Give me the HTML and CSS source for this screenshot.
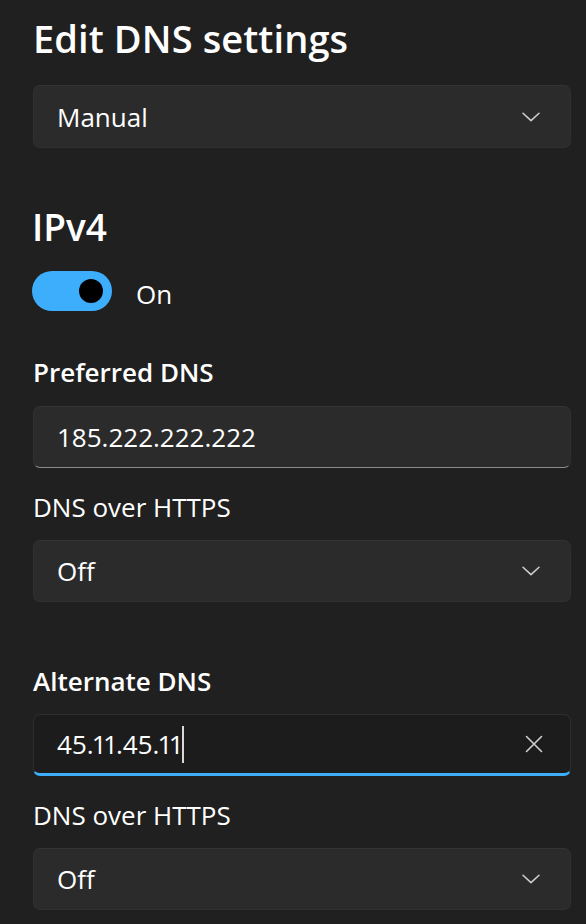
FILE: index.html
```html
<!DOCTYPE html>
<html lang="en">
<head>
<meta charset="utf-8">
<title>Edit DNS settings</title>
<link rel="stylesheet" href="styles.css">
</head>
<body>
<main class="panel">
  <h1 class="title">Edit DNS settings</h1>
  <div class="select select-mode">
    <span class="select-value">Manual</span>
    <svg class="chevron" viewBox="0 0 18 10" width="18" height="10"><path d="M1 1.2 L9 8.6 L17 1.2" /></svg>
  </div>

  <h2 class="section">IPv4</h2>
  <div class="toggle-row">
    <span class="toggle"><span class="knob"></span></span>
    <span class="toggle-label">On</span>
  </div>

  <div class="field field-first">
    <div class="field-label strong">Preferred DNS</div>
    <div class="textbox">185.222.222.222</div>
  </div>
  <div class="field field-sub">
    <div class="field-label">DNS over HTTPS</div>
    <div class="select">
      <span class="select-value">Off</span>
      <svg class="chevron" viewBox="0 0 18 10" width="18" height="10"><path d="M1 1.2 L9 8.6 L17 1.2" /></svg>
    </div>
  </div>

  <div class="field field-group">
    <div class="field-label strong">Alternate DNS</div>
    <div class="textbox focused">
      <span class="input-text">45.11.45.11</span><span class="caret"></span>
      <svg class="clear" viewBox="0 0 18 18" width="18" height="18"><path d="M1.5 1.5 L16.5 16.5 M16.5 1.5 L1.5 16.5" /></svg>
    </div>
  </div>
  <div class="field field-sub">
    <div class="field-label">DNS over HTTPS</div>
    <div class="select">
      <span class="select-value">Off</span>
      <svg class="chevron" viewBox="0 0 18 10" width="18" height="10"><path d="M1 1.2 L9 8.6 L17 1.2" /></svg>
    </div>
  </div>
</main>
</body>
</html>
```

FILE: styles.css
```css
html, body {
  margin: 0;
  padding: 0;
  background: #202020;
}

body {
  font-family: "Open Sans", "Noto Sans", sans-serif;
  color: #ffffff;
  width: 586px;
  height: 924px;
  overflow: hidden;
}

.panel {
  padding: 16px 15px 0 33px;
  display: flex;
  flex-direction: column;
}

.title {
  margin: 0;
  font-size: 38px;
  font-weight: 600;
  line-height: 44px;
  height: 44px;
  letter-spacing: 0.1px;
}

.select,
.textbox {
  box-sizing: border-box;
  height: 62px;
  border-radius: 7px;
  background: #2b2b2b;
  border: 1px solid #303030;
  border-top-color: #333333;
  display: flex;
  align-items: center;
  padding: 0 30px 0 23px;
  font-size: 26px;
  line-height: 36px;
}

.select {
  justify-content: space-between;
}

.select-mode {
  margin-top: 25px;
  height: 63px;
}

.chevron {
  fill: none;
  stroke: #d0d0d0;
  stroke-width: 1.5;
  stroke-linecap: round;
  stroke-linejoin: round;
}

.section {
  margin: 55px 0 0;
  font-size: 37px;
  font-weight: 600;
  line-height: 48px;
  height: 48px;
  margin-left: -1px;
}

.toggle-row {
  margin-top: 20px;
  display: flex;
  align-items: center;
  height: 40px;
  margin-left: -1px;
}

.toggle {
  box-sizing: border-box;
  width: 80px;
  height: 40px;
  border-radius: 20px;
  background: #3caefc;
  display: flex;
  align-items: center;
  justify-content: flex-end;
  padding-right: 9px;
}

.knob {
  width: 24px;
  height: 24px;
  border-radius: 50%;
  background: #000000;
}

.toggle-label {
  margin-left: 24px;
  padding-top: 5px;
  font-size: 26px;
  line-height: 36px;
}

.field {
  display: flex;
  flex-direction: column;
  gap: 16px;
}

.field-first {
  margin-top: 43px;
}

.field-sub {
  margin-top: 21px;
  gap: 15px;
}

.field-group {
  margin-top: 61px;
  gap: 15px;
}

.field-label {
  font-size: 26px;
  line-height: 36px;
  height: 36px;
  font-weight: 400;
}

.field-label.strong {
  font-weight: 600;
}

.textbox {
  border-bottom: 1px solid #8c8c8c;
}

.textbox.focused {
  background: #1c1c1c;
  border: 1px solid #2e2e2e;
  border-bottom: 3px solid #3caefc;
  padding-right: 27px;
}

.input-text {
  font-variant-numeric: proportional-nums;
  font-feature-settings: "pnum" 1;
}

.caret {
  width: 2px;
  height: 37px;
  margin-left: 0;
  background: #d8d8d8;
}

.clear {
  margin-left: auto;
  fill: none;
  stroke: #cfcfcf;
  stroke-width: 1.6;
  stroke-linecap: round;
}
```
